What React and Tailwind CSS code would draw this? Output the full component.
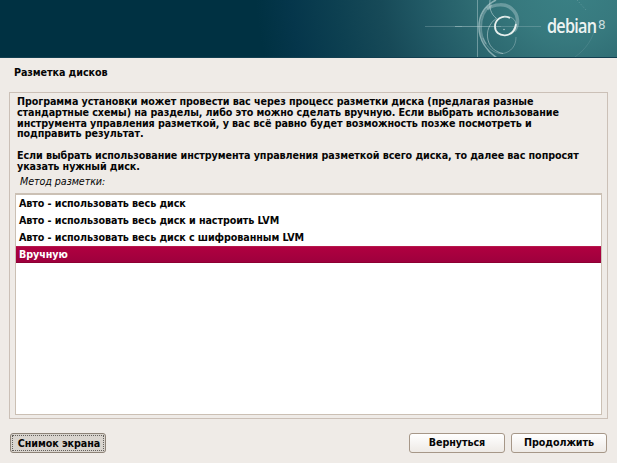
const methods = [
  "Авто - использовать весь диск",
  "Авто - использовать весь диск и настроить LVM",
  "Авто - использовать весь диск с шифрованным LVM",
  "Вручную",
];

function Swirl() {
  return (
    <svg className="w-[200px] h-[58px]" viewBox="0 0 200 58" fill="none">
      <g stroke="#c2d8da">
        <path d="M60.5 0V58" strokeWidth="1" opacity=".45" />
        <path d="M8 26.5H45" opacity=".25" />
        <path d="M38 26.5H84" opacity=".45" />
        <path d="M84 26.5H124" opacity=".25" />
        <path d="M70 9C77 4 89 3 95 9C102 15 102 25 97 31" strokeWidth="3.5" opacity=".38" />
        <path d="M79 0C67 6 62 16 62 27C62 40 70 51 80 58" strokeWidth="1.6" opacity=".6" />
        <path d="M75 5C67 10 64 18 64 28C64 34 66 40 69 44" strokeWidth="2" opacity=".35" />
        <path d="M73 0C72 8 74 14 79 18" opacity=".6" />
        <path d="M80 18C72 23 69 32 71 40C73 48 79 52 86 53.5" opacity=".55" />
        <path d="M66 38C70 48 77 54 86 53.5C94 52 99 46 99 37" opacity=".35" />
        <path d="M160 0L169 10" opacity=".3" strokeDasharray="1 2" />
        <path d="M158 57C169 49 176 39 179 25" opacity=".12" />
      </g>
      <path
        d="M93 18C85 14 78 20 78 26.5C78 32 82 35.500 88 35.3C94 35 98 31 99 24"
        stroke="#e8efed"
        strokeWidth="1.8"
      />
      <path d="M87 16.5C94 16 99 19 99 25" stroke="#c2d8da" opacity=".5" />
      <circle cx="87" cy="29.5" r=".7" fill="#c2d8da" />
    </svg>
  );
}

function Banner() {
  return (
    <header className="relative h-[58px] shrink-0 overflow-hidden border-b border-[#123f50] bg-[radial-gradient(circle_at_570px_-20px,#3b8286_0px,#37797e_60px,#2e6b72_100px,#215965_150px,#174a58_190px,#0d4051_235px,#05364b_280px,#003142_315px)]">
      <div className="absolute right-0 top-0">
        <Swirl />
      </div>
      <div className="absolute left-[547px] top-[13px] origin-left scale-x-[.81] font-['Open_Sans',sans-serif] text-[20px] font-semibold leading-[26px] tracking-[-.9px] text-[#edf3f2]">
        debian
      </div>
      <div className="absolute left-[598px] top-[18px] font-['DejaVu_Sans',sans-serif] text-[12px] font-normal leading-[14px] text-[#cbdedf]">
        8
      </div>
    </header>
  );
}

export default function App() {
  return (
    <div className="flex h-[463px] w-[617px] flex-col overflow-hidden bg-[#efebe7] font-['DejaVu_Sans',sans-serif] text-[9.6px] font-bold tracking-[-.08px] text-[#050505]">
      <Banner />

      <h1 className="h-[34px] pl-[14px] pt-[9px] leading-[12px]">Разметка дисков</h1>

      <main className="ml-[9px] flex h-[327px] w-[599px] shrink-0 flex-col border border-[#cbc0b7] pl-[5px] pr-[5px] pt-[4px]">
        <div className="h-[75px] whitespace-pre pl-[2px] leading-[10.8px]">
          <p>Программа установки может провести вас через процесс разметки диска (предлагая разные</p>
          <p>стандартные схемы) на разделы, либо это можно сделать вручную. Если выбрать использование</p>
          <p>инструмента управления разметкой, у вас всё равно будет возможность позже посмотреть и</p>
          <p>подправить результат.</p>
          <p className="mt-[10.8px]">Если выбрать использование инструмента управления разметкой всего диска, то далее вас попросят</p>
          <p>указать нужный диск.</p>
        </div>
        <p className="h-[21px] pl-[5px] pt-[4px] font-normal italic leading-[12px]">Метод разметки:</p>

        {/* Partitioning methods */}
        <ul className="h-[222px] w-[587px] border border-t-2 border-[#cbc0b4] bg-white">
          {methods.map((method) => (
            <li
              key={method}
              className={
                method === "Вручную"
                  ? "h-[17px] whitespace-pre border-y border-t-[#b5174b] border-b-[#8c0033] bg-linear-to-b from-[#b00040] to-[#9e003d] pl-[3px] leading-[15px] text-white"
                  : "h-[17px] whitespace-pre pl-[3px] leading-[17px]"
              }
            >
              {method}
            </li>
          ))}
        </ul>
      </main>

      <footer className="flex pl-[10px] pt-[14px]">
        <button className="h-[20px] w-[96px] rounded-[3px] border border-[#8c8277] bg-[#d9d4ce] p-[1px]">
          <span className="block h-full border border-dotted border-[#625f5b] pl-[2px] leading-[15px]">Снимок экрана</span>
        </button>
        <button className="ml-[303px] h-[20px] w-[96px] rounded-[3px] border border-[#a69788] bg-linear-to-b from-white to-[#eeeae6] pb-[1px] leading-[16px]">
          Вернуться
        </button>
        <button className="ml-[6px] h-[20px] w-[96px] rounded-[3px] border border-[#a69788] bg-linear-to-b from-white to-[#eeeae6] pb-[1px] leading-[16px]">
          Продолжить
        </button>
      </footer>
    </div>
  );
}
